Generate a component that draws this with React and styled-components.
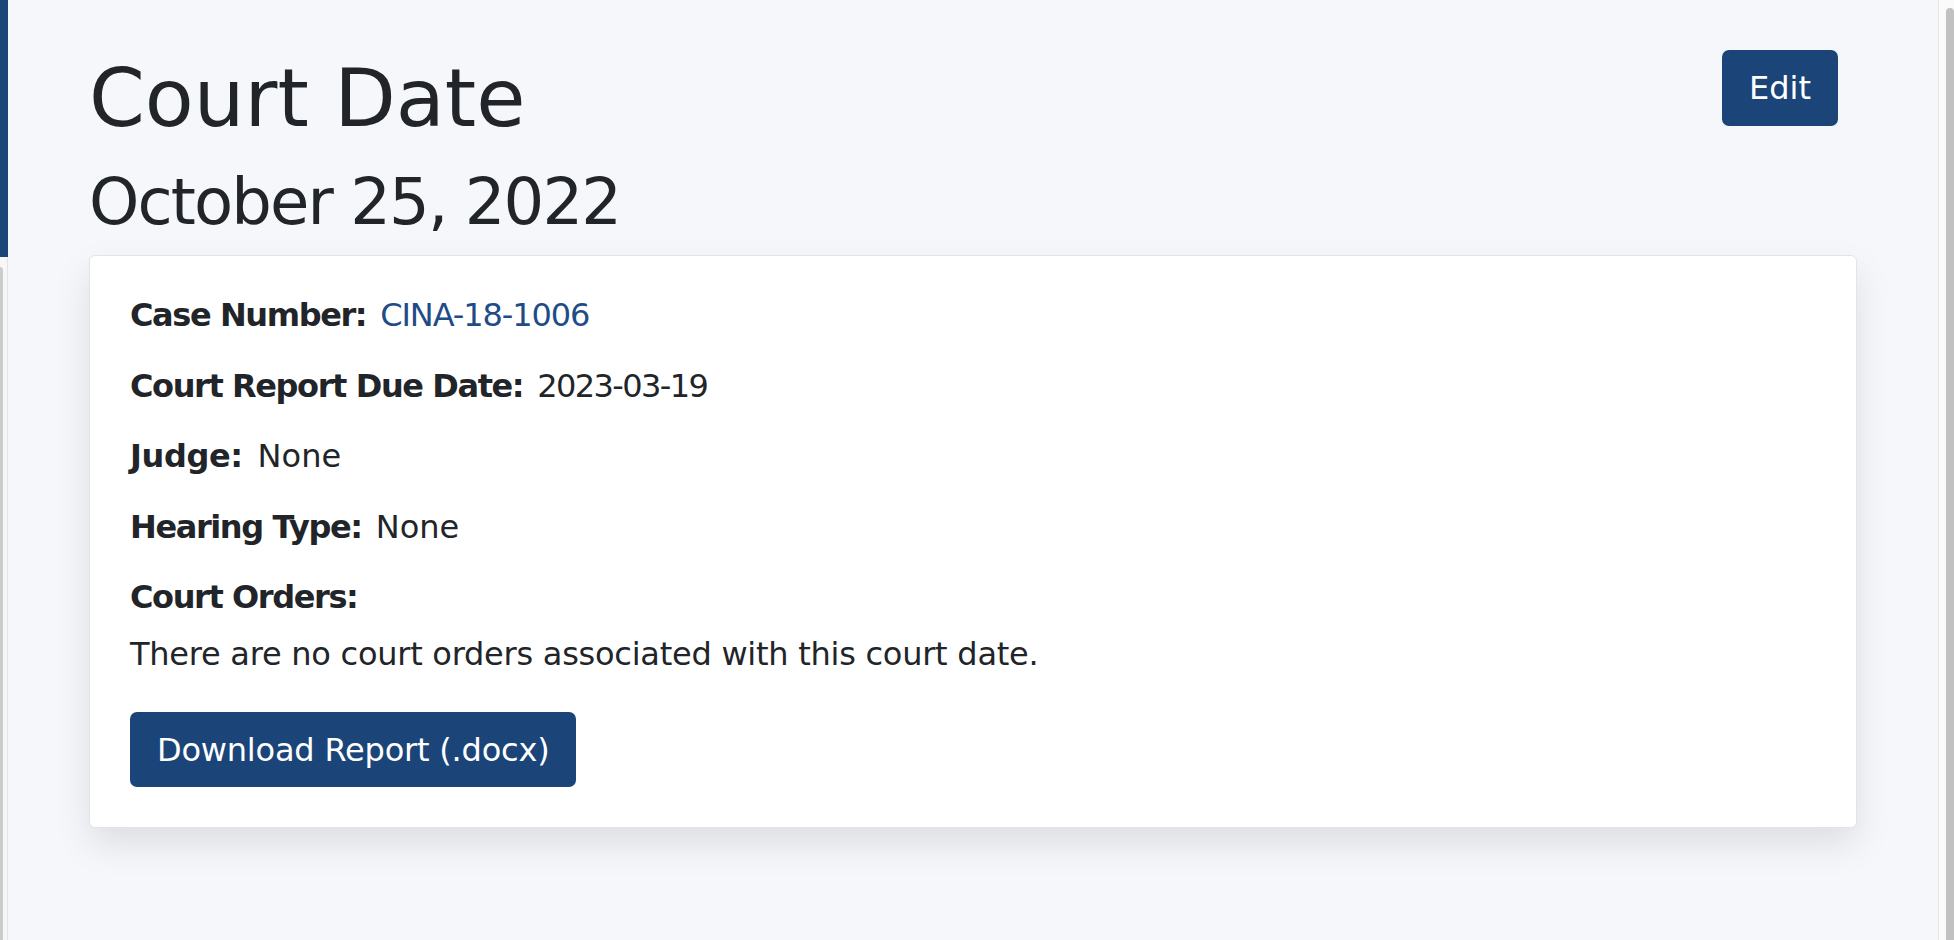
import React from "react";
import styled, { createGlobalStyle } from "styled-components";

const GlobalStyle = createGlobalStyle`
  html, body { margin: 0; padding: 0; }
  body {
    font-family: "DejaVu Sans", "Open Sans", sans-serif;
    color: #212529;
    background: #f5f7fb;
    overflow: hidden;
  }
`;

const Shell = styled.div`
  display: flex;
  height: 940px;
  width: 1954px;
  overflow: hidden;
`;

const Sidebar = styled.div`
  width: 8px;
  flex: none;
  display: flex;
  flex-direction: column;
`;

const SidebarTop = styled.div`
  height: 257px;
  background: #1b4478;
`;

const SidebarRest = styled.div`
  flex: 1;
  background: #f7f7f7;
  border-right: 1px solid #e4e4e4;
  padding-top: 10px;
  box-sizing: border-box;
`;

const SidebarThumb = styled.div`
  width: 3px;
  height: 100%;
  background: #cbcbcb;
  border-top-right-radius: 3px;
`;

const Main = styled.main`
  flex: 1;
  background: #f5f7fb;
  padding: 50px 81px 0 81px;
  box-sizing: border-box;
`;

const Header = styled.header`
  display: flex;
  justify-content: space-between;
  align-items: flex-start;
  padding-right: 19px;
`;

const Titles = styled.div`
  display: flex;
  flex-direction: column;
`;

const Title = styled.h1`
  margin: 1px 0 17px;
  font-size: 80px;
  line-height: 96px;
  font-weight: 400;
  color: #212529;
`;

const Subtitle = styled.h2`
  margin: 0 0 14px;
  font-size: 64px;
  line-height: 77px;
  font-weight: 400;
  letter-spacing: -1.9px;
  color: #212529;
`;

const Button = styled.button`
  height: ${(p) => p.$h}px;
  padding: 0 ${(p) => p.$px}px;
  border: none;
  border-radius: 7px;
  background: #1b4478;
  color: #ffffff;
  font-family: "DejaVu Sans", sans-serif;
  font-size: 32px;
  letter-spacing: ${(p) => p.$ls || 0}px;
  display: inline-flex;
  align-items: center;
  cursor: pointer;
`;

const Card = styled.section`
  background: #ffffff;
  border: 1px solid #e2e4e8;
  border-radius: 6px;
  box-shadow: 0 16px 36px rgba(0, 0, 0, 0.1);
  padding: 35px 40px 40px 40px;
  display: flex;
  flex-direction: column;
  align-items: flex-start;
`;

const Row = styled.div`
  display: flex;
  align-items: baseline;
  gap: ${(p) => p.$gap || 14}px;
  height: 48px;
  line-height: 48px;
  font-size: 32px;
  margin-bottom: ${(p) => p.$mb}px;
`;

const Label = styled.span`
  font-weight: 700;
  letter-spacing: ${(p) => (p.$ls !== undefined ? p.$ls : -1.4)}px;
`;

const Value = styled.span`
  letter-spacing: ${(p) => p.$ls || 0}px;
`;

const Link = styled.a`
  color: #1f4c87;
  text-decoration: none;
  letter-spacing: -1.1px;
`;

const Note = styled.p`
  margin: 0 0 34px;
  font-size: 32px;
  line-height: 48px;
  letter-spacing: -0.25px;
`;

const Scrollbar = styled.div`
  width: 16px;
  flex: none;
  background: #fafafa;
  border-left: 1px solid #e6e6e6;
  box-sizing: border-box;
  padding: 8px 0 0 7px;
  display: flex;
`;

const Thumb = styled.div`
  flex: 1;
  background: #c1c1c1;
  border-top-left-radius: 4px;
  border-top-right-radius: 4px;
`;

const details = [
  { label: "Case Number:", value: "CINA-18-1006", link: true },
  { label: "Court Report Due Date:", value: "2023-03-19", ls: -1.6 },
  { label: "Judge:", value: "None", labelLs: -0.4, gap: 15 },
  { label: "Hearing Type:", value: "None" },
];

export default function App() {
  return (
    <>
      <GlobalStyle />
      <Shell>
        <Sidebar>
          <SidebarTop />
          <SidebarRest>
            <SidebarThumb />
          </SidebarRest>
        </Sidebar>
        <Main>
          <Header>
            <Titles>
              <Title>Court Date</Title>
              <Subtitle>October 25, 2022</Subtitle>
            </Titles>
            <Button $h={76} $px={27}>Edit</Button>
          </Header>
          <Card>
            {details.map((d) => (
              <Row key={d.label} $mb={22.5} $gap={d.gap}>
                <Label $ls={d.labelLs}>{d.label}</Label>
                {d.link ? (
                  <Link href="#">{d.value}</Link>
                ) : (
                  <Value $ls={d.ls}>{d.value}</Value>
                )}
              </Row>
            ))}
            <Row $mb={9}>
              <Label>Court Orders:</Label>
            </Row>
            <Note>There are no court orders associated with this court date.</Note>
            <Button $h={75} $px={27} $ls={-0.2}>Download Report (.docx)</Button>
          </Card>
        </Main>
        <Scrollbar>
          <Thumb />
        </Scrollbar>
      </Shell>
    </>
  );
}
